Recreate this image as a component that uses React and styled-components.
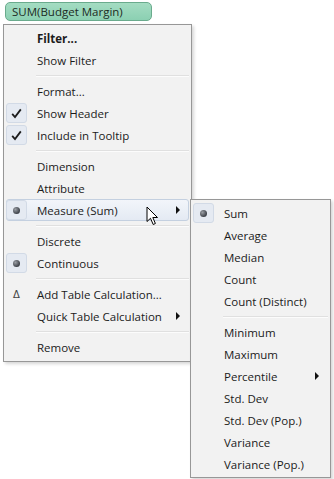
import React from "react";
import styled, { createGlobalStyle, css } from "styled-components";

const GlobalStyle = createGlobalStyle`
  html, body {
    margin: 0;
    padding: 0;
    background: #ffffff;
  }
  body {
    font-family: "Open Sans", "Noto Sans", sans-serif;
    color: #1b1b1b;
  }
`;

const mainItems = [
  { label: "Filter...", bold: true },
  { label: "Show Filter" },
  { sep: true },
  { label: "Format..." },
  { label: "Show Header", icon: "check" },
  { label: "Include in Tooltip", icon: "check" },
  { sep: true },
  { label: "Dimension" },
  { label: "Attribute" },
  { label: "Measure (Sum)", icon: "dot", arrow: true, open: true },
  { sep: true },
  { label: "Discrete" },
  { label: "Continuous", icon: "dot" },
  { sep: true },
  { label: "Add Table Calculation...", icon: "delta" },
  { label: "Quick Table Calculation", arrow: true },
  { sep: true },
  { label: "Remove" },
];

const subItems = [
  { label: "Sum", icon: "dot" },
  { label: "Average" },
  { label: "Median" },
  { label: "Count" },
  { label: "Count (Distinct)" },
  { sep: true },
  { label: "Minimum" },
  { label: "Maximum" },
  { label: "Percentile", arrow: true },
  { label: "Std. Dev" },
  { label: "Std. Dev (Pop.)" },
  { label: "Variance" },
  { label: "Variance (Pop.)" },
];

const Icon = ({ type }) => {
  if (type === "check")
    return (
      <svg width="11" height="11" viewBox="0 0 11 11">
        <path d="M1.2 5.8 L4 9 L9.8 1.4" fill="none" stroke="#1c1c1c" strokeWidth="1.8" />
      </svg>
    );
  if (type === "dot") return <Dot />;
  if (type === "delta") return <Delta>Δ</Delta>;
  return null;
};

const MenuList = ({ items, width, sub }) => (
  <Menu $width={width} $sub={sub}>
    {items.map((it, i) =>
      it.sep ? (
        <Separator key={i} />
      ) : (
        <Item key={i} $hot={it.open}>
          <IconBox $checked={it.icon === "check" || it.icon === "dot"}>
            <Icon type={it.icon} />
          </IconBox>
          <Label $bold={it.bold}>{it.label}</Label>
          {it.arrow && <Arrow />}
          {it.open && (
            <>
              <Cursor width="13" height="20" viewBox="0 0 13 20">
                <path
                  d="M1 1 L1 15.5 L4.5 12.3 L7.2 18.5 L9.4 17.5 L6.8 11.5 L11.5 11.5 Z"
                  fill="#fff"
                  stroke="#000"
                  strokeWidth="1"
                  strokeLinejoin="round"
                />
              </Cursor>
              <SubMenuSlot>
                <MenuList items={subItems} width={141} sub />
              </SubMenuSlot>
            </>
          )}
        </Item>
      )
    )}
  </Menu>
);

export default function App() {
  return (
    <>
      <GlobalStyle />
      <Page>
        <Pill>SUM(Budget Margin)</Pill>
        <MainWrap>
          <MenuList items={mainItems} width={189} />
        </MainWrap>
      </Page>
    </>
  );
}

const Page = styled.div`
  width: 334px;
  height: 479px;
  box-sizing: border-box;
  padding-top: 2px;
  overflow: hidden;
`;

const Pill = styled.div`
  margin-left: 5px;
  width: 147px;
  height: 19px;
  box-sizing: border-box;
  border: 1px solid #6aab8d;
  border-radius: 5px;
  background: linear-gradient(#a4dcc2, #8bd0b2);
  font-size: 11.5px;
  line-height: 17px;
  padding-left: 6px;
  color: #1c2b24;
`;

const MainWrap = styled.div`
  margin: 3px 0 0 3px;
`;

const Menu = styled.div`
  position: relative;
  width: ${(p) => p.$width}px;
  box-sizing: border-box;
  background: #f2f2f2;
  border: 1px solid #979797;
  padding: ${(p) => (p.$sub ? "2px 2px" : "2px 2px 3px")};
  box-shadow: 2px 2px 3px rgba(0, 0, 0, 0.16);
`;

const Item = styled.div`
  position: relative;
  height: 22px;
  display: flex;
  align-items: center;
  box-sizing: border-box;
  border: 1px solid transparent;
  border-radius: 3px;
  ${(p) =>
    p.$hot &&
    css`
      background: linear-gradient(#f2f5fa, #e4eaf3);
      border-color: #c4d0e0;
    `}
`;

const IconBox = styled.span`
  width: 21px;
  height: 20px;
  margin-left: -1px;
  display: flex;
  align-items: center;
  justify-content: center;
  box-sizing: border-box;
  border-radius: 3px;
  ${(p) =>
    p.$checked &&
    css`
      background: #e5eaf2;
      border: 1px solid #d2dae6;
    `}
`;

const Dot = styled.span`
  width: 7px;
  height: 7px;
  border-radius: 50%;
  background: radial-gradient(circle at 35% 35%, #9a9ea4, #3d4148 70%);
`;

const Delta = styled.span`
  font-family: "DejaVu Sans", sans-serif;
  font-size: 10px;
  color: #444;
`;

const Label = styled.span`
  margin-left: 10px;
  font-size: 11.5px;
  font-weight: ${(p) => (p.$bold ? 700 : 400)};
  white-space: nowrap;
`;

const Arrow = styled.span`
  margin-left: auto;
  margin-right: 8px;
  width: 0;
  height: 0;
  border-top: 4px solid transparent;
  border-bottom: 4px solid transparent;
  border-left: 4px solid #111;
`;

const Separator = styled.div`
  height: 1px;
  margin: 4px 0 3px 30px;
  background: #e0e0e0;
  border-bottom: 1px solid #fcfcfc;
`;

const SubMenuSlot = styled.div`
  position: absolute;
  left: calc(100% + 2px);
  top: -1px;
  z-index: 2;
`;

const Cursor = styled.svg`
  position: absolute;
  left: 139px;
  top: 6px;
  z-index: 3;
`;
